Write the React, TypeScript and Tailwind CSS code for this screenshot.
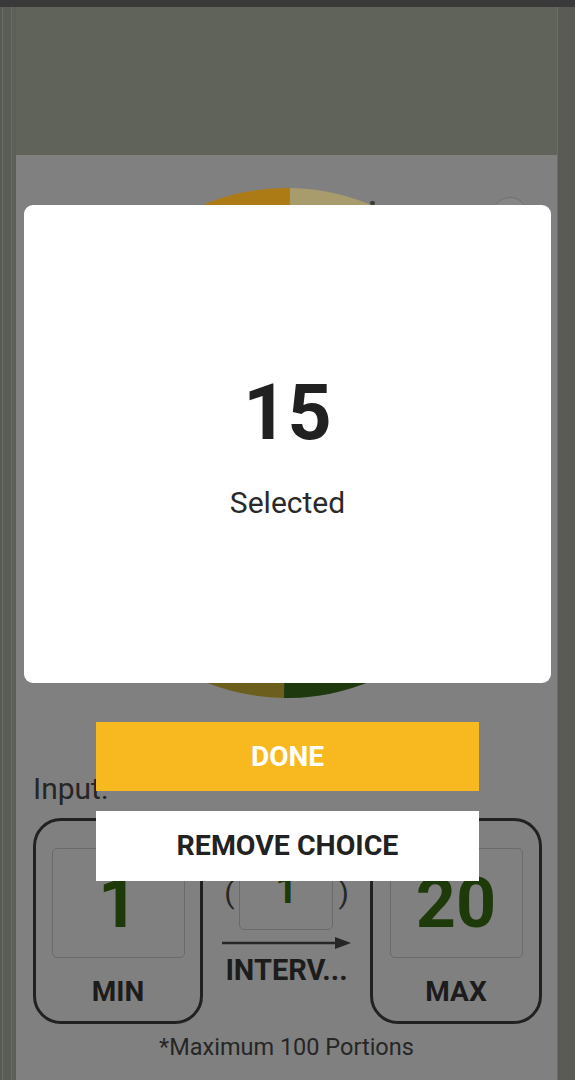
import React from 'react';

const font = { fontFamily: 'Roboto, "Noto Sans", sans-serif' };

const Pie: React.FC = () => (
  <svg width="470" height="510" viewBox="0 0 470 510" className="block">
    {/* quadrants of the spinning wheel, dimmed by the backdrop */}
    <path d="M235 255 L238 0 A235 255 0 0 0 0 255 Z" fill="#ad7b16" />
    <path d="M235 255 L238 0 A235 255 0 0 1 470 255 Z" fill="#a89c6c" />
    <path d="M235 255 L0 255 A235 255 0 0 0 232 510 Z" fill="#6c5f1e" />
    <path d="M235 255 L232 510 A235 255 0 0 0 470 255 Z" fill="#1e390d" />
  </svg>
);

const ValueCard: React.FC<{ value: string; label: string; width: string }> = ({ value, label, width }) => (
  <div className={`${width} h-[206px] border-[3px] border-[#212121] rounded-[28px] flex flex-col items-center pt-[27px]`}>
    <div className="w-[133px] h-[110px] border border-[#6a6a6a] rounded-[5px] flex items-center justify-center">
      <span className="text-[70px] leading-none font-bold text-[#1e3a0b]">{value}</span>
    </div>
    <span className="mt-[20px] text-[28px] leading-none font-bold text-[#1c1c1c]">{label}</span>
  </div>
);

const App: React.FC = () => {
  return (
    <div className="relative w-[575px] h-[1080px] overflow-hidden bg-[#5c5e57]" style={font}>
      {/* status strip */}
      <div className="h-[7px] bg-[#393939]" />

      <div className="flex h-[1073px]">
        <div className="w-[16px] flex">
          <div className="w-[3px] border-r border-[#6a6c66] bg-[#575953]" />
          <div className="w-[9px] border-r border-[#6a6c66] bg-[#5a5c56]" />
          <div className="flex-1 bg-[#5c5e58]" />
        </div>

        <div className="w-[541px] flex flex-col">
          <div className="h-[148px] bg-[#5f6359]" />

          <div className="relative flex-1 bg-[#808080] flex flex-col">
            <div className="absolute right-[29px] top-[42px] w-[36px] h-[36px] rounded-full bg-[#868686] border border-[#6f6f6f]" />
            <div className="absolute left-[354px] top-[46px] w-[5px] h-[4px] rounded-full bg-[#3a3a3a]" />

            <div className="mt-[33px] flex justify-center">
              <Pie />
            </div>

            <span className="mt-[76px] ml-[17px] text-[30px] leading-none text-[#262626]">Input:</span>

            <div className="mt-[14px] ml-[17px] flex">
              <ValueCard value="1" label="MIN" width="w-[170px]" />
              <div className="w-[167px] flex flex-col items-center pt-[52px]">
                <div className="flex items-start gap-[5px]">
                  <span className="mt-[8px] text-[30px] leading-none text-[#262626]">(</span>
                  <div className="w-[94px] h-[60px] border border-[#6a6a6a] rounded-[5px] flex justify-center">
                    <span className="text-[39px] leading-none font-bold text-[#1e3a0b]">1</span>
                  </div>
                  <span className="mt-[8px] text-[30px] leading-none text-[#262626]">)</span>
                </div>
                <svg width="130" height="14" viewBox="0 0 130 14" className="mt-[6px] block">
                  <line x1="0" y1="7" x2="116" y2="7" stroke="#262626" strokeWidth="2.5" />
                  <path d="M113 1 L129 7 L113 13 Z" fill="#262626" />
                </svg>
                <span className="mt-[6px] text-[29px] leading-none font-bold text-[#1c1c1c]">INTERV...</span>
              </div>
              <ValueCard value="20" label="MAX" width="w-[172px]" />
            </div>

            <span className="mt-[12px] text-center text-[23.5px] leading-none text-[#262626]">
              *Maximum 100 Portions
            </span>
          </div>
        </div>

        <div className="flex-1 bg-[#5a5b55] border-l border-[#6c6d68]" />
      </div>

      {/* result dialog */}
      <div className="absolute inset-0 flex flex-col items-center pt-[205px]">
        <div className="w-[527px] h-[478px] bg-white rounded-[9px] flex flex-col items-center pt-[170px]">
          <span className="text-[77px] leading-none font-bold text-[#212121]">15</span>
          <span className="mt-[36px] text-[30px] leading-none text-[#2a2a2a]">Selected</span>
        </div>
        <button className="mt-[39px] w-[383px] h-[69px] bg-[#f7b91f] text-white text-[28px] font-bold">DONE</button>
        <button className="mt-[20px] w-[383px] h-[70px] bg-white text-[#222222] text-[28.5px] font-bold">
          REMOVE CHOICE
        </button>
      </div>
    </div>
  );
};

export default App;
